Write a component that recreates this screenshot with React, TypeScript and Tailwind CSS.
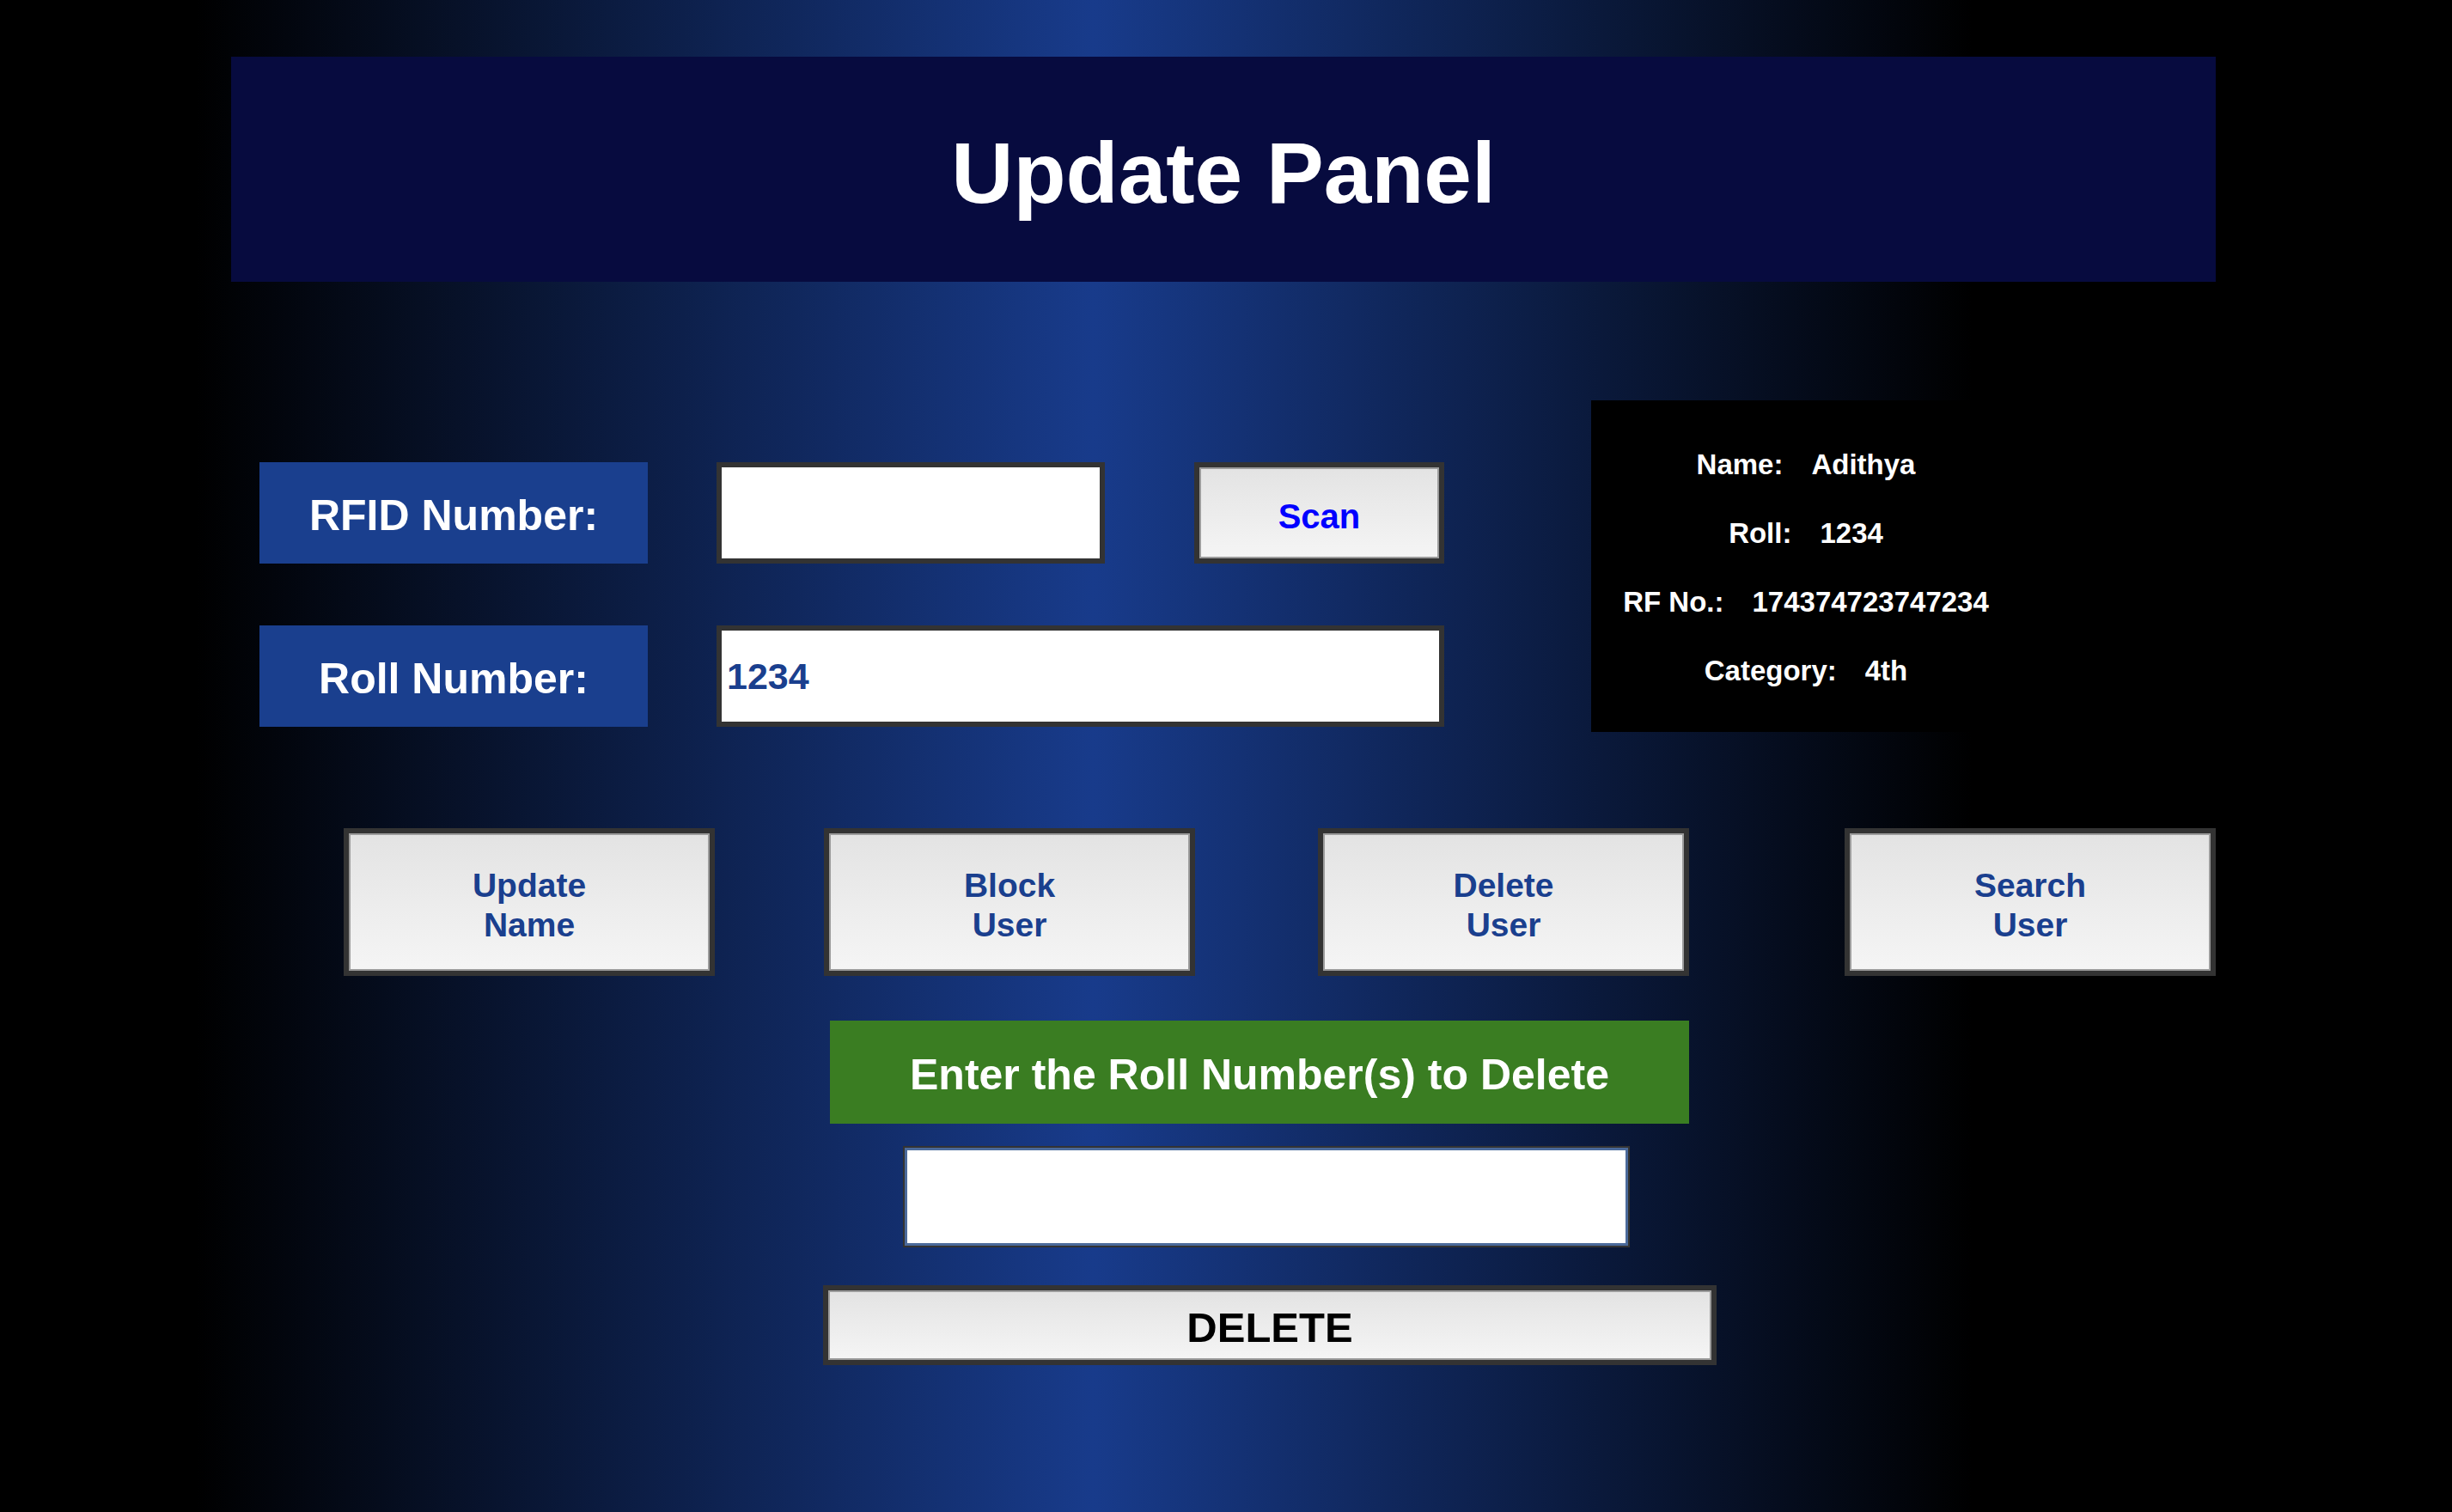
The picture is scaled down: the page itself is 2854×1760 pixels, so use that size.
import { useState } from 'react'

const actions = [
  { top: 'Update', bottom: 'Name', ml: 'ml-[400px]' },
  { top: 'Block', bottom: 'User', ml: 'ml-[127px]' },
  { top: 'Delete', bottom: 'User', ml: 'ml-[143px]' },
  { top: 'Search', bottom: 'User', ml: 'ml-[181px]' },
]

const info = [
  { label: 'Name:', value: 'Adithya' },
  { label: 'Roll:', value: '1234' },
  { label: 'RF No.:', value: '174374723747234' },
  { label: 'Category:', value: '4th' },
]

export default function App() {
  const [rfid, setRfid] = useState('')
  const [roll, setRoll] = useState('1234')
  const [toDelete, setToDelete] = useState('')

  return (
    <div className="min-h-screen h-[1760px] w-full pt-[66px] font-['Liberation_Sans',Arial,Helvetica,sans-serif] bg-[linear-gradient(to_right,#000000_8%,#183b8b_44.6%,#000000_80.4%)]">
      {/* Header */}
      <header className="ml-[269px] w-[2310px] h-[262px] pt-[7px] bg-[#070b3f] flex items-center justify-center">
        <h1 className="text-white font-bold text-[100px] leading-none">Update Panel</h1>
      </header>

      {/* Form + info card */}
      <section className="mt-[138px] pl-[302px] flex items-start">
        <div className="mt-[71px] flex flex-col gap-[70px]">
          <div className="flex items-center h-[120px]">
            <div className="w-[452px] h-[118px] pt-[7px] bg-[#1a3f8e] flex items-center justify-center text-white font-bold text-[50px]">
              RFID Number:
            </div>
            <input
              value={rfid}
              onChange={(e) => setRfid(e.target.value)}
              className="ml-[80px] w-[452px] h-[118px] bg-white border-[6px] border-[#333] outline-none px-[6px] text-[43px] font-bold text-[#1a3f8e]"
            />
            <button className="ml-[104px] w-[291px] h-[118px] pt-[7px] border-[6px] border-[#333] shadow-[inset_0_0_0_2px_#9c9c9c] bg-[linear-gradient(to_bottom,#e3e3e3,#f5f5f5)] text-[#0000ff] font-bold text-[40px]">
              Scan
            </button>
          </div>
          <div className="flex items-center h-[120px]">
            <div className="w-[452px] h-[118px] pt-[7px] bg-[#1a3f8e] flex items-center justify-center text-white font-bold text-[50px]">
              Roll Number:
            </div>
            <input
              value={roll}
              onChange={(e) => setRoll(e.target.value)}
              className="ml-[80px] w-[847px] h-[118px] bg-white border-[6px] border-[#333] outline-none px-[6px] text-[43px] font-bold text-[#1a3f8e]"
            />
          </div>
        </div>

        <div className="ml-[171px] w-[500px] h-[386px] pt-[3px] bg-black flex flex-col items-center justify-center gap-[40px] text-white font-bold text-[33px] leading-[40px]">
          {info.map((row) => (
            <div key={row.label} className="flex gap-[33px]">
              <span>{row.label}</span>
              <span>{row.value}</span>
            </div>
          ))}
        </div>
      </section>

      {/* Action buttons */}
      <section className="mt-[112px] flex">
        {actions.map((a) => (
          <button
            key={a.top}
            className={`${a.ml} w-[432px] h-[172px] pt-[7px] border-[6px] border-[#333] shadow-[inset_0_0_0_2px_#9c9c9c] bg-[linear-gradient(to_bottom,#e3e3e3,#f5f5f5)] text-[#1a3f8e] font-bold text-[39px] leading-[46px]`}
          >
            {a.top}
            <br />
            {a.bottom}
          </button>
        ))}
      </section>

      {/* Delete by roll number */}
      <section className="mt-[52px] flex flex-col">
        <div className="ml-[966px] w-[1000px] h-[120px] pt-[7px] bg-[#3a7d22] flex items-center justify-center text-white font-bold text-[50px]">
          Enter the Roll Number(s) to Delete
        </div>
        <input
          value={toDelete}
          onChange={(e) => setToDelete(e.target.value)}
          className="mt-[26px] ml-[1051px] w-[846px] h-[118px] bg-white border-2 border-[#333] shadow-[inset_0_0_0_3px_#4b6a9b] outline-none px-[8px] text-[43px] font-bold text-[#1a3f8e]"
        />
        <button className="mt-[44px] ml-[958px] w-[1040px] h-[93px] pt-[7px] border-[6px] border-[#333] shadow-[inset_0_0_0_2px_#9c9c9c] bg-[linear-gradient(to_bottom,#e3e3e3,#f5f5f5)] text-black font-bold text-[49px]">
          DELETE
        </button>
      </section>
    </div>
  )
}
